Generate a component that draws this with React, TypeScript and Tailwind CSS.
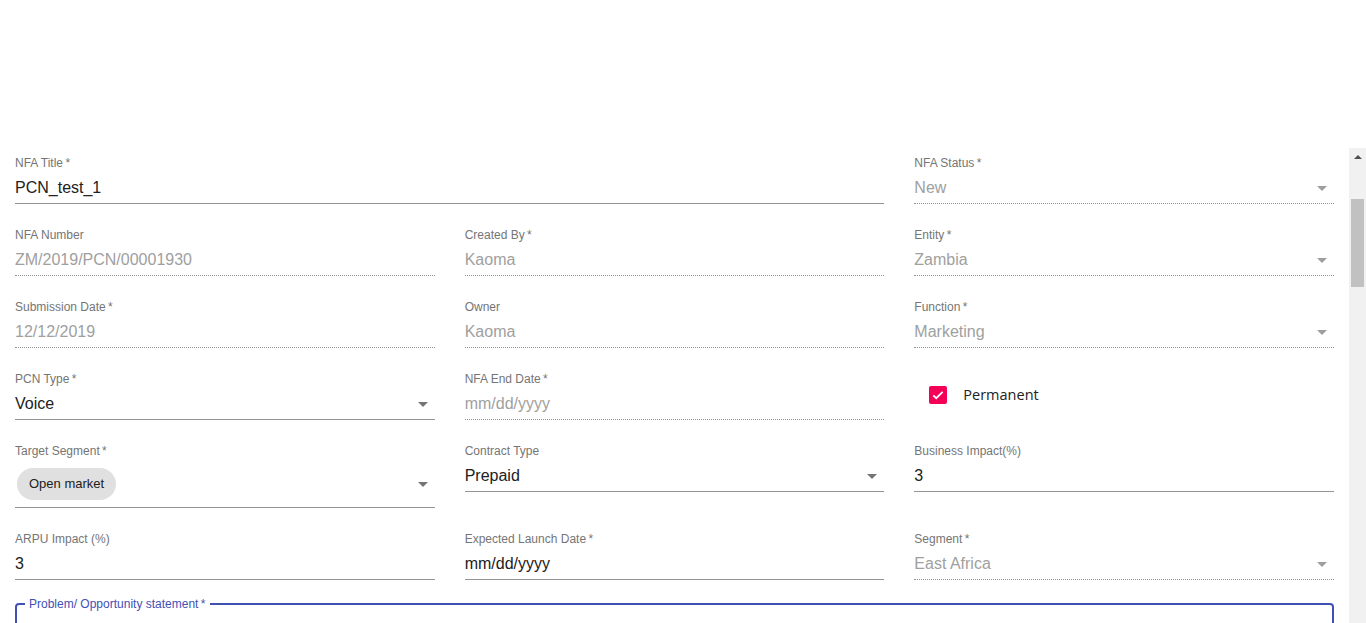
import React from "react";

const Arrow = ({ disabled }: { disabled?: boolean }) => (
  <svg width="24" height="24" viewBox="0 0 24 24" className="shrink-0">
    <path d="M7 10l5 5 5-5z" fill={disabled ? "rgba(0,0,0,0.38)" : "rgba(0,0,0,0.54)"} />
  </svg>
);

const Label = ({ text, req }: { text: string; req?: boolean }) => (
  <div className="mb-[1px] h-[16px] text-[12px] leading-[16px] text-[#757575]">
    {text}
    {req ? "\u2009*" : ""}
  </div>
);

type FieldProps = {
  label: string;
  req?: boolean;
  value: string;
  disabled?: boolean;
  select?: boolean;
  placeholder?: boolean;
  className?: string;
};

const Field = ({ label, req, value, disabled, select, placeholder, className }: FieldProps) => (
  <div className={"flex flex-col " + (className ?? "")}>
    <Label text={label} req={req} />
    <div
      className={
        "flex h-[32px] items-center border-b " +
        (disabled || placeholder ? "border-dotted border-[#949494]" : "border-solid border-[#949494]")
      }
    >
      <div
        className={
          "flex-1 pb-[1px] text-[16px] leading-[19px] " +
          (disabled || placeholder ? "text-[#a0a0a0]" : "text-[#212121]")
        }
      >
        {value}
      </div>
      {select ? <Arrow disabled={disabled} /> : null}
    </div>
  </div>
);

export default function App() {
  return (
    <div className="flex h-[623px] w-[1366px] flex-col overflow-hidden bg-white font-['Liberation_Sans',_Arial,_sans-serif]">
      <div className="h-[148px] shrink-0" />
      <div className="flex min-h-0 flex-1">
        <div className="flex-1 overflow-hidden px-[15px] pt-[7px]">
          <div className="grid grid-cols-3 gap-x-[30px] gap-y-[23px]">
            <Field className="col-span-2" label="NFA Title" req value="PCN_test_1" />
            <Field label="NFA Status" req value="New" disabled select />

            <Field label="NFA Number" value="ZM/2019/PCN/00001930" disabled />
            <Field label="Created By" req value="Kaoma" disabled />
            <Field label="Entity" req value="Zambia" disabled select />

            <Field label="Submission Date" req value="12/12/2019" disabled />
            <Field label="Owner" value="Kaoma" disabled />
            <Field label="Function" req value="Marketing" disabled select />

            <Field label="PCN Type" req value="Voice" select />
            <Field label="NFA End Date" req value="mm/dd/yyyy" placeholder />
            <div className="flex h-[48px] items-center self-start pl-[15px]">
              <div className="flex h-[18px] w-[18px] items-center justify-center rounded-[2px] bg-[#f50057]">
                <svg width="14" height="14" viewBox="0 0 24 24">
                  <path d="M4 12.5l5 5L20 6.5" fill="none" stroke="white" strokeWidth="3" />
                </svg>
              </div>
              <span className="ml-[16px] pb-[1px] font-['Open_Sans',_sans-serif] text-[14.5px] text-[#222]">Permanent</span>
            </div>

            <div className="flex flex-col">
              <Label text="Target Segment" req />
              <div className="flex items-center border-b border-[#949494] pt-[8px] pb-[7px]">
                <div className="flex flex-1">
                  <span className="ml-[2px] flex h-[32px] items-center rounded-[16px] bg-[#e0e0e0] px-[12px] text-[13px] text-[#212121]">
                    Open market
                  </span>
                </div>
                <Arrow />
              </div>
            </div>
            <div className="self-start">
              <Field label="Contract Type" value="Prepaid" select />
            </div>
            <div className="self-start">
              <Field label="Business Impact(%)" value="3" />
            </div>

            <Field label="ARPU Impact (%)" value="3" />
            <Field label="Expected Launch Date" req value="mm/dd/yyyy" />
            <Field label="Segment" req value="East Africa" disabled select />

            <fieldset className="col-span-3 h-[80px] rounded-[4px] border-2 border-[#3f51b5] px-[8px]">
              <legend className="px-[4px] text-[12px] leading-[2px] text-[#3f51b5]">
                Problem/ Opportunity statement{"\u2009*"}
              </legend>
            </fieldset>
          </div>
        </div>
        <div className="flex w-[17px] shrink-0 flex-col items-center bg-[#f1f1f1]">
          <div className="flex h-[17px] w-full items-center justify-center">
            <svg width="8" height="5" viewBox="0 0 8 5">
              <path d="M0 5L4 1 8 5z" fill="#505050" />
            </svg>
          </div>
          <div className="mt-[34px] h-[88px] w-[13px] bg-[#c1c1c1]" />
        </div>
      </div>
    </div>
  );
}
